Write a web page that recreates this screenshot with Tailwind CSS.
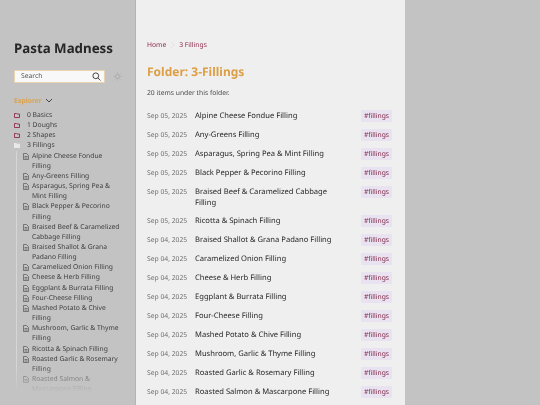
<!DOCTYPE html>
<html><head><meta charset="utf-8"><script src="https://cdn.jsdelivr.net/npm/@tailwindcss/browser@4"></script></head>
<body class="m-0 bg-[#c3c3c3] font-['Noto_Sans',sans-serif] [text-rendering:geometricPrecision]">
<div class="w-[540px] h-[405px] overflow-hidden flex bg-[#c3c3c3] blur-[0.25px]">
<aside class="w-[135px] h-[405px] shrink-0 relative overflow-hidden pl-[14px] pt-[39px]">
<h1 class="text-[13.3px] leading-[19px] font-bold text-[#262626] m-0">Pasta Madness</h1>
<div class="flex items-center gap-[8px] mt-[12px]">
<div class="w-[91px] h-[13px] bg-[#f8f8f8] border border-[#e8d4ae] rounded-[1px] flex items-center justify-between pl-[6px] pr-[3px]">
<span class="text-[6.75px] text-[#555]">Search</span>
<svg width="9" height="9" viewBox="0 0 10 10" fill="none" stroke="#333" stroke-width="1"><circle cx="4.2" cy="4.2" r="3.2"/><path d="M6.6 6.6 L9.4 9.4"/></svg>
</div>
<svg width="9" height="9" viewBox="0 0 10 10" fill="none" stroke="#a0a0a0" stroke-width="0.7"><circle cx="5" cy="5" r="2.2"/><path d="M5 0.5V1.8M5 8.2V9.5M0.5 5H1.8M8.2 5H9.5M1.8 1.8L2.7 2.7M7.3 7.3L8.2 8.2M1.8 8.2L2.7 7.3M7.3 2.7L8.2 1.8"/></svg>
</div>
<div class="flex items-center gap-[3px] mt-[12px] h-[12px]">
<span class="text-[6.8px] font-semibold text-[#dd9f45]">Explorer</span>
<svg width="8" height="6" viewBox="0 0 8 6" fill="none" stroke="#444" stroke-width="1"><path d="M1 1 L4 4 L7 1"/></svg>
</div>
<ul class="mt-[3px] text-[6.75px] leading-[10.15px] text-[#404040]">
<li class="flex items-center gap-[7px] h-[10.15px]"><svg width="6" height="5" viewBox="0 0 6 5" fill="none" stroke="#8c2a4c" stroke-width="0.9"><path d="M0.5 0.5H2.5L3 1H5.5V4.5H0.5Z"/></svg>0 Basics</li>
<li class="flex items-center gap-[7px] h-[10.15px]"><svg width="6" height="5" viewBox="0 0 6 5" fill="none" stroke="#8c2a4c" stroke-width="0.9"><path d="M0.5 0.5H2.5L3 1H5.5V4.5H0.5Z"/></svg>1 Doughs</li>
<li class="flex items-center gap-[7px] h-[10.15px]"><svg width="6" height="5" viewBox="0 0 6 5" fill="none" stroke="#8c2a4c" stroke-width="0.9"><path d="M0.5 0.5H2.5L3 1H5.5V4.5H0.5Z"/></svg>2 Shapes</li>
<li class="flex items-center gap-[7px] h-[10.15px]"><svg width="6" height="5" viewBox="0 0 6 5" fill="#e8e8e8"><path d="M0 0H2.5L3 .7H6V5H0Z"/></svg>3 Fillings</li>
</ul>
<ul class="ml-[2px] border-l border-[#d6d6d6] pl-[6px] text-[6.75px] leading-[10.15px] text-[#404040] w-[106px]">
<li class="flex gap-[3px]"><svg class="mt-[2px] shrink-0" width="6" height="7" viewBox="0 0 6 7" fill="none" stroke="#555" stroke-width="0.7"><path d="M.5.5H3.5L5.5 2.5V6.5H.5Z M1.5 3.5H4.5M1.5 5H4.5"/></svg><span>Alpine Cheese Fondue Filling</span></li>
<li class="flex gap-[3px]"><svg class="mt-[2px] shrink-0" width="6" height="7" viewBox="0 0 6 7" fill="none" stroke="#555" stroke-width="0.7"><path d="M.5.5H3.5L5.5 2.5V6.5H.5Z M1.5 3.5H4.5M1.5 5H4.5"/></svg><span>Any-Greens Filling</span></li>
<li class="flex gap-[3px]"><svg class="mt-[2px] shrink-0" width="6" height="7" viewBox="0 0 6 7" fill="none" stroke="#555" stroke-width="0.7"><path d="M.5.5H3.5L5.5 2.5V6.5H.5Z M1.5 3.5H4.5M1.5 5H4.5"/></svg><span>Asparagus, Spring Pea &amp; Mint Filling</span></li>
<li class="flex gap-[3px]"><svg class="mt-[2px] shrink-0" width="6" height="7" viewBox="0 0 6 7" fill="none" stroke="#555" stroke-width="0.7"><path d="M.5.5H3.5L5.5 2.5V6.5H.5Z M1.5 3.5H4.5M1.5 5H4.5"/></svg><span>Black Pepper &amp; Pecorino Filling</span></li>
<li class="flex gap-[3px]"><svg class="mt-[2px] shrink-0" width="6" height="7" viewBox="0 0 6 7" fill="none" stroke="#555" stroke-width="0.7"><path d="M.5.5H3.5L5.5 2.5V6.5H.5Z M1.5 3.5H4.5M1.5 5H4.5"/></svg><span>Braised Beef &amp; Caramelized Cabbage Filling</span></li>
<li class="flex gap-[3px]"><svg class="mt-[2px] shrink-0" width="6" height="7" viewBox="0 0 6 7" fill="none" stroke="#555" stroke-width="0.7"><path d="M.5.5H3.5L5.5 2.5V6.5H.5Z M1.5 3.5H4.5M1.5 5H4.5"/></svg><span>Braised Shallot &amp; Grana Padano Filling</span></li>
<li class="flex gap-[3px]"><svg class="mt-[2px] shrink-0" width="6" height="7" viewBox="0 0 6 7" fill="none" stroke="#555" stroke-width="0.7"><path d="M.5.5H3.5L5.5 2.5V6.5H.5Z M1.5 3.5H4.5M1.5 5H4.5"/></svg><span>Caramelized Onion Filling</span></li>
<li class="flex gap-[3px]"><svg class="mt-[2px] shrink-0" width="6" height="7" viewBox="0 0 6 7" fill="none" stroke="#555" stroke-width="0.7"><path d="M.5.5H3.5L5.5 2.5V6.5H.5Z M1.5 3.5H4.5M1.5 5H4.5"/></svg><span>Cheese &amp; Herb Filling</span></li>
<li class="flex gap-[3px]"><svg class="mt-[2px] shrink-0" width="6" height="7" viewBox="0 0 6 7" fill="none" stroke="#555" stroke-width="0.7"><path d="M.5.5H3.5L5.5 2.5V6.5H.5Z M1.5 3.5H4.5M1.5 5H4.5"/></svg><span>Eggplant &amp; Burrata Filling</span></li>
<li class="flex gap-[3px]"><svg class="mt-[2px] shrink-0" width="6" height="7" viewBox="0 0 6 7" fill="none" stroke="#555" stroke-width="0.7"><path d="M.5.5H3.5L5.5 2.5V6.5H.5Z M1.5 3.5H4.5M1.5 5H4.5"/></svg><span>Four-Cheese Filling</span></li>
<li class="flex gap-[3px]"><svg class="mt-[2px] shrink-0" width="6" height="7" viewBox="0 0 6 7" fill="none" stroke="#555" stroke-width="0.7"><path d="M.5.5H3.5L5.5 2.5V6.5H.5Z M1.5 3.5H4.5M1.5 5H4.5"/></svg><span>Mashed Potato &amp; Chive Filling</span></li>
<li class="flex gap-[3px]"><svg class="mt-[2px] shrink-0" width="6" height="7" viewBox="0 0 6 7" fill="none" stroke="#555" stroke-width="0.7"><path d="M.5.5H3.5L5.5 2.5V6.5H.5Z M1.5 3.5H4.5M1.5 5H4.5"/></svg><span>Mushroom, Garlic &amp; Thyme Filling</span></li>
<li class="flex gap-[3px]"><svg class="mt-[2px] shrink-0" width="6" height="7" viewBox="0 0 6 7" fill="none" stroke="#555" stroke-width="0.7"><path d="M.5.5H3.5L5.5 2.5V6.5H.5Z M1.5 3.5H4.5M1.5 5H4.5"/></svg><span>Ricotta &amp; Spinach Filling</span></li>
<li class="flex gap-[3px]"><svg class="mt-[2px] shrink-0" width="6" height="7" viewBox="0 0 6 7" fill="none" stroke="#555" stroke-width="0.7"><path d="M.5.5H3.5L5.5 2.5V6.5H.5Z M1.5 3.5H4.5M1.5 5H4.5"/></svg><span>Roasted Garlic &amp; Rosemary Filling</span></li>
<li class="flex gap-[3px]"><svg class="mt-[2px] shrink-0" width="6" height="7" viewBox="0 0 6 7" fill="none" stroke="#555" stroke-width="0.7"><path d="M.5.5H3.5L5.5 2.5V6.5H.5Z M1.5 3.5H4.5M1.5 5H4.5"/></svg><span>Roasted Salmon &amp; Mascarpone Filling</span></li>
</ul>
<div class="absolute left-0 right-0 top-[365px] h-[27px] bg-gradient-to-b from-[#c3c3c3]/0 to-[#c3c3c3]"></div>
<div class="absolute left-0 right-0 top-[392px] h-[13px] bg-[#c3c3c3]"></div>
</aside>
<main class="w-[270px] h-[405px] shrink-0 bg-[#efefef] border-l border-[#e0ad60] pl-[11px] pr-[13px] pt-[39px] overflow-hidden">
<div class="flex items-center text-[6.75px] leading-[12px] text-[#8c2a4c]"><span>Home</span><svg class="mx-[4px]" width="5" height="8" viewBox="0 0 5 8" fill="none" stroke="#dedede" stroke-width="0.8"><path d="M1 1L4 4L1 7"/></svg><span>3 Fillings</span></div>
<h2 class="text-[12px] leading-[17px] font-bold text-[#dd9f45] mt-[12px] m-0">Folder: 3-Fillings</h2>
<p class="text-[6.75px] leading-[10px] text-[#4a4a4a] mt-[8px] mb-[8.5px]">20 items under this folder.</p>
<ul class="text-[7.6px] leading-[11px] text-[#1f1f1f]">
<li class="flex items-start py-[3.475px]"><span class="w-[48px] shrink-0 text-[6.75px] leading-[11px] text-[#707070]">Sep 05, 2025</span><span class="flex-1 pr-[6px] mt-[0.8px]">Alpine Cheese Fondue Filling</span><span class="w-[31px] h-[12px] text-center bg-[#e9e3f1] text-[#7f2545] text-[6.75px] leading-[12px] rounded-[1px]">#fillings</span></li>
<li class="flex items-start py-[3.475px]"><span class="w-[48px] shrink-0 text-[6.75px] leading-[11px] text-[#707070]">Sep 05, 2025</span><span class="flex-1 pr-[6px] mt-[0.8px]">Any-Greens Filling</span><span class="w-[31px] h-[12px] text-center bg-[#e9e3f1] text-[#7f2545] text-[6.75px] leading-[12px] rounded-[1px]">#fillings</span></li>
<li class="flex items-start py-[3.475px]"><span class="w-[48px] shrink-0 text-[6.75px] leading-[11px] text-[#707070]">Sep 05, 2025</span><span class="flex-1 pr-[6px] mt-[0.8px]">Asparagus, Spring Pea &amp; Mint Filling</span><span class="w-[31px] h-[12px] text-center bg-[#e9e3f1] text-[#7f2545] text-[6.75px] leading-[12px] rounded-[1px]">#fillings</span></li>
<li class="flex items-start py-[3.475px]"><span class="w-[48px] shrink-0 text-[6.75px] leading-[11px] text-[#707070]">Sep 05, 2025</span><span class="flex-1 pr-[6px] mt-[0.8px]">Black Pepper &amp; Pecorino Filling</span><span class="w-[31px] h-[12px] text-center bg-[#e9e3f1] text-[#7f2545] text-[6.75px] leading-[12px] rounded-[1px]">#fillings</span></li>
<li class="flex items-start py-[3.475px]"><span class="w-[48px] shrink-0 text-[6.75px] leading-[11px] text-[#707070]">Sep 05, 2025</span><span class="flex-1 pr-[24px] mt-[0.8px]">Braised Beef &amp; Caramelized Cabbage Filling</span><span class="w-[31px] h-[12px] text-center bg-[#e9e3f1] text-[#7f2545] text-[6.75px] leading-[12px] rounded-[1px]">#fillings</span></li>
<li class="flex items-start py-[3.475px]"><span class="w-[48px] shrink-0 text-[6.75px] leading-[11px] text-[#707070]">Sep 05, 2025</span><span class="flex-1 pr-[6px] mt-[0.8px]">Ricotta &amp; Spinach Filling</span><span class="w-[31px] h-[12px] text-center bg-[#e9e3f1] text-[#7f2545] text-[6.75px] leading-[12px] rounded-[1px]">#fillings</span></li>
<li class="flex items-start py-[3.475px]"><span class="w-[48px] shrink-0 text-[6.75px] leading-[11px] text-[#707070]">Sep 04, 2025</span><span class="flex-1 pr-[6px] mt-[0.8px]">Braised Shallot &amp; Grana Padano Filling</span><span class="w-[31px] h-[12px] text-center bg-[#e9e3f1] text-[#7f2545] text-[6.75px] leading-[12px] rounded-[1px]">#fillings</span></li>
<li class="flex items-start py-[3.475px]"><span class="w-[48px] shrink-0 text-[6.75px] leading-[11px] text-[#707070]">Sep 04, 2025</span><span class="flex-1 pr-[6px] mt-[0.8px]">Caramelized Onion Filling</span><span class="w-[31px] h-[12px] text-center bg-[#e9e3f1] text-[#7f2545] text-[6.75px] leading-[12px] rounded-[1px]">#fillings</span></li>
<li class="flex items-start py-[3.475px]"><span class="w-[48px] shrink-0 text-[6.75px] leading-[11px] text-[#707070]">Sep 04, 2025</span><span class="flex-1 pr-[6px] mt-[0.8px]">Cheese &amp; Herb Filling</span><span class="w-[31px] h-[12px] text-center bg-[#e9e3f1] text-[#7f2545] text-[6.75px] leading-[12px] rounded-[1px]">#fillings</span></li>
<li class="flex items-start py-[3.475px]"><span class="w-[48px] shrink-0 text-[6.75px] leading-[11px] text-[#707070]">Sep 04, 2025</span><span class="flex-1 pr-[6px] mt-[0.8px]">Eggplant &amp; Burrata Filling</span><span class="w-[31px] h-[12px] text-center bg-[#e9e3f1] text-[#7f2545] text-[6.75px] leading-[12px] rounded-[1px]">#fillings</span></li>
<li class="flex items-start py-[3.475px]"><span class="w-[48px] shrink-0 text-[6.75px] leading-[11px] text-[#707070]">Sep 04, 2025</span><span class="flex-1 pr-[6px] mt-[0.8px]">Four-Cheese Filling</span><span class="w-[31px] h-[12px] text-center bg-[#e9e3f1] text-[#7f2545] text-[6.75px] leading-[12px] rounded-[1px]">#fillings</span></li>
<li class="flex items-start py-[3.475px]"><span class="w-[48px] shrink-0 text-[6.75px] leading-[11px] text-[#707070]">Sep 04, 2025</span><span class="flex-1 pr-[6px] mt-[0.8px]">Mashed Potato &amp; Chive Filling</span><span class="w-[31px] h-[12px] text-center bg-[#e9e3f1] text-[#7f2545] text-[6.75px] leading-[12px] rounded-[1px]">#fillings</span></li>
<li class="flex items-start py-[3.475px]"><span class="w-[48px] shrink-0 text-[6.75px] leading-[11px] text-[#707070]">Sep 04, 2025</span><span class="flex-1 pr-[6px] mt-[0.8px]">Mushroom, Garlic &amp; Thyme Filling</span><span class="w-[31px] h-[12px] text-center bg-[#e9e3f1] text-[#7f2545] text-[6.75px] leading-[12px] rounded-[1px]">#fillings</span></li>
<li class="flex items-start py-[3.475px]"><span class="w-[48px] shrink-0 text-[6.75px] leading-[11px] text-[#707070]">Sep 04, 2025</span><span class="flex-1 pr-[6px] mt-[0.8px]">Roasted Garlic &amp; Rosemary Filling</span><span class="w-[31px] h-[12px] text-center bg-[#e9e3f1] text-[#7f2545] text-[6.75px] leading-[12px] rounded-[1px]">#fillings</span></li>
<li class="flex items-start py-[3.475px]"><span class="w-[48px] shrink-0 text-[6.75px] leading-[11px] text-[#707070]">Sep 04, 2025</span><span class="flex-1 pr-[6px] mt-[0.8px]">Roasted Salmon &amp; Mascarpone Filling</span><span class="w-[31px] h-[12px] text-center bg-[#e9e3f1] text-[#7f2545] text-[6.75px] leading-[12px] rounded-[1px]">#fillings</span></li>
</ul>
</main>
</div>
</body></html>
